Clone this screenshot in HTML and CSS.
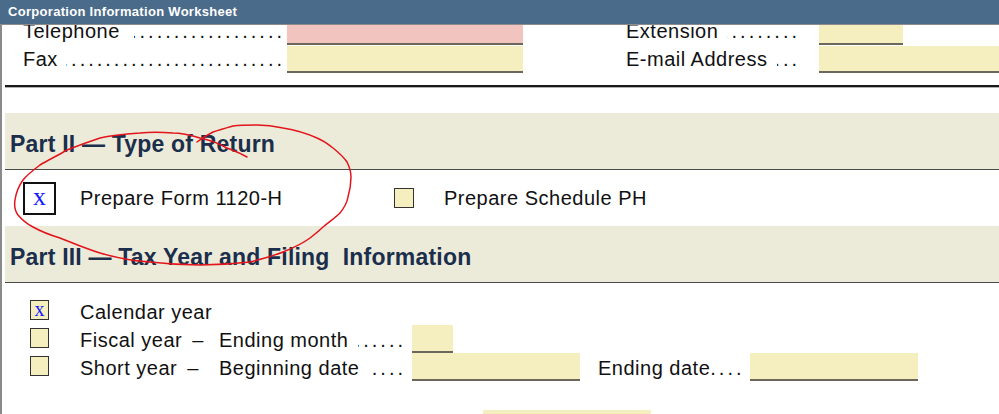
FILE: index.html
```html
<!DOCTYPE html>
<html>
<head>
<meta charset="utf-8">
<link rel="stylesheet" href="styles.css">
</head>
<body>
<div class="titlebar">Corporation Information Worksheet</div>
<div class="viewport">
  <div class="sheet">
    <div class="contact">
      <div class="cblock cblock-left">
        <div class="crow">
          <span class="lhead lhead-left">
            <span class="label label-wide">Telephone</span>
            <span class="leader">..........................................</span>
          </span>
          <span class="field field-pink field-phone"></span>
        </div>
        <div class="crow">
          <span class="lhead lhead-left">
            <span class="label">Fax</span>
            <span class="leader">..........................................</span>
          </span>
          <span class="field field-phone"></span>
        </div>
      </div>
      <div class="cblock cblock-right">
        <div class="crow">
          <span class="lhead lhead-right">
            <span class="label label-tight">Extension</span>
            <span class="leader leader-right">..........................</span>
          </span>
          <span class="field field-ext"></span>
        </div>
        <div class="crow">
          <span class="lhead lhead-right">
            <span class="label label-tight">E-mail Address</span>
            <span class="leader leader-right">..........................</span>
          </span>
          <span class="field field-grow"></span>
        </div>
      </div>
    </div>

    <div class="rule"></div>

    <div class="band band-first">
      <h2 class="heading">Part II — Type of Return</h2>
    </div>
    <div class="choice-row">
      <span class="checkbox checkbox-big">x</span>
      <span class="choice-text choice-text-first">Prepare Form 1120-H</span>
      <span class="checkbox checkbox-empty"></span>
      <span class="choice-text choice-text-second">Prepare Schedule PH</span>
    </div>

    <div class="band">
      <h2 class="heading heading-pre">Part III — Tax Year and Filing  Information</h2>
    </div>

    <div class="year-rows">
      <div class="trow">
        <span class="tcell-box"><span class="checkbox checkbox-small">x</span></span>
        <span class="ttext">Calendar year</span>
      </div>
      <div class="trow">
        <span class="tcell-box"><span class="checkbox checkbox-small"></span></span>
        <span class="ttext">Fiscal year<span class="dash">–</span></span>
        <span class="ttext tlead"><span>Ending month</span><span class="leader leader-t">..............................</span></span>
        <span class="field field-month"></span>
      </div>
      <div class="trow">
        <span class="tcell-box"><span class="checkbox checkbox-small"></span></span>
        <span class="ttext">Short year<span class="dash">–</span></span>
        <span class="ttext tlead"><span>Beginning date</span><span class="leader leader-t">..............................</span></span>
        <span class="field field-date"></span>
        <span class="ttext end-label">Ending date<span class="leader-end">....</span></span>
        <span class="field field-date"></span>
      </div>
      <div class="trow trow-last">
        <span class="field field-bottom"></span>
      </div>
    </div>
  </div>

  <svg class="annotation" width="999" height="414" viewBox="0 0 999 414" aria-hidden="true">
    <path d="M247 157 C238 152 232 150 227 148 C218 143 210 140 200 138 C190 135 183 133 173 133 C160 132 150 132 140 133 C125 134 112 135 100 138 C88 142 77 146 67 150 C57 156 48 160 40 165 C32 171 27 175 23 180 C18 187 16 193 15 200 C14 206 15 211 18 215 C23 221 27 224 33 227 C42 232 50 235 60 238 C75 244 87 249 100 253 C117 258 133 261 150 262 C167 264 183 265 200 265 C217 265 233 264 250 262 C262 259 273 256 283 252 C293 248 302 244 310 238 C315 234 319 231 323 227 C329 222 335 218 340 213 C344 208 347 203 348 197 C350 190 351 184 351 177 C351 171 349 166 347 162 C343 156 338 152 333 148 C328 144 322 140 317 138 C306 133 295 130 283 128 C274 126 265 125 257 125 C249 125 241 125 233 126 C226 128 219 130 213 132 C207 135 201 139 197 142" fill="none" stroke="#e3141b" stroke-width="1.5" stroke-linecap="round" stroke-linejoin="round"/>
  </svg>
</div>
</body>
</html>
```

FILE: styles.css
```css
* {
  box-sizing: border-box;
}

html, body {
  margin: 0;
  padding: 0;
}

body {
  width: 999px;
  height: 414px;
  overflow: hidden;
  background: #ffffff;
  font-family: "Liberation Sans", Arial, sans-serif;
  color: #111111;
  position: relative;
}

.titlebar {
  height: 25px;
  background: #4a6b8a;
  border-bottom: 1px solid #8c8c8c;
  color: #ffffff;
  font-weight: bold;
  font-size: 13px;
  letter-spacing: 0.3px;
  line-height: 23px;
  padding-left: 8px;
  position: relative;
  z-index: 2;
}

.viewport {
  height: 389px;
  overflow: hidden;
  border-left: 2px solid #8a8a8a;
}

.sheet {
  margin-top: -8px;
  font-size: 20px;
  letter-spacing: 0.5px;
}

.contact {
  display: flex;
}

.cblock {
  display: flex;
  flex-direction: column;
}

.cblock-left {
  width: 500px;
  margin-left: 21px;
}

.cblock-right {
  flex: 1;
  margin-left: 103px;
}

.crow {
  display: flex;
  height: 28px;
  line-height: 28px;
}

.lhead {
  display: flex;
  flex: none;
  overflow: hidden;
}

.lhead-left {
  width: 264px;
}

.lhead-right {
  width: 193px;
}

.label {
  white-space: nowrap;
  margin-right: 8px;
}

.label-wide {
  margin-right: 14px;
}

.label-tight {
  margin-right: 9px;
}

.leader {
  flex: 1;
  min-width: 0;
  overflow: hidden;
  white-space: nowrap;
  direction: rtl;
  letter-spacing: 3px;
  margin-right: 2px;
}

.leader-right {
  margin-right: 19px;
}

.field {
  display: block;
  height: 27px;
  margin-top: 1px;
  background: #f5efbf;
  border-bottom: 2px solid #6b675a;
}

.field-pink {
  background: #f2c4bf;
}

.field-phone {
  width: 236px;
}

.field-ext {
  width: 84px;
}

.field-grow {
  flex: 1;
}

.rule {
  margin: 12px 0 0 3px;
  height: 3px;
  border-top: 2px solid #1a1a1a;
  border-bottom: 1px solid #b0b0b0;
}

.band {
  margin-left: 3px;
  height: 57px;
  background: #ecead9;
  border-bottom: 1px solid #4a4a4a;
}

.band-first {
  margin-top: 25px;
}

.heading {
  margin: 0;
  padding: 18px 0 0 5px;
  font-size: 23px;
  line-height: 26px;
  font-weight: bold;
  color: #1b2e4b;
  letter-spacing: 0.2px;
  white-space: nowrap;
}

.heading-pre {
  white-space: pre;
}

.choice-row {
  display: flex;
  align-items: center;
  height: 56px;
  padding-left: 21px;
}

.checkbox {
  display: inline-flex;
  align-items: center;
  justify-content: center;
  font-family: "Liberation Serif", "Times New Roman", serif;
  color: #1a1aff;
  letter-spacing: 0;
}

.checkbox-big {
  flex: none;
  width: 33px;
  height: 33px;
  border: 2px solid #111111;
  background: #ffffff;
  font-size: 26px;
  line-height: 1;
  padding-bottom: 3px;
}

.checkbox-empty {
  flex: none;
  width: 20px;
  height: 20px;
  border: 1px solid #333333;
  background: #f5efbf;
}

.choice-text {
  white-space: nowrap;
}

.choice-text-first {
  width: 314px;
  margin-left: 24px;
}

.choice-text-second {
  margin-left: 30px;
}

.year-rows {
  margin-top: 14px;
}

.trow {
  display: grid;
  grid-template-columns: 78px 139px 193px auto auto auto;
  justify-content: start;
  height: 28px;
  line-height: 28px;
}

.trow-last {
  margin-top: 29px;
  grid-template-columns: 481px auto;
}

.trow-last .field-bottom {
  grid-column: 2;
}

.tcell-box {
  padding-left: 28px;
  padding-top: 3px;
}

.checkbox-small {
  width: 19px;
  height: 20px;
  border: 1px solid #333333;
  background: #f5efbf;
  font-size: 20px;
  line-height: 1;
  padding-bottom: 3px;
  vertical-align: top;
}

.ttext {
  white-space: nowrap;
  padding-top: 1px;
}

.dash {
  margin-left: 10px;
}

.tlead {
  display: flex;
}

.leader-t {
  margin: 0 6px 0 10px;
}

.end-label {
  display: flex;
  margin-left: 18px;
}

.leader-end {
  width: 40px;
  white-space: nowrap;
  letter-spacing: 3px;
  overflow: hidden;
}

.field-month {
  width: 41px;
  height: 28px;
  margin-top: 0;
}

.field-date {
  width: 168px;
  height: 28px;
  margin-top: 0;
}

.field-bottom {
  width: 168px;
  height: 28px;
  margin-top: 0;
}

.annotation {
  position: absolute;
  left: 0;
  top: 0;
  pointer-events: none;
  z-index: 3;
}
```
